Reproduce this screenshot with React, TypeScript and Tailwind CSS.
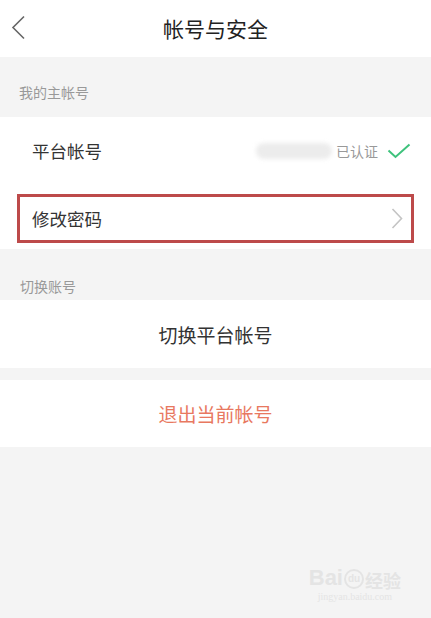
import React from 'react';

const font = { fontFamily: '"Noto Sans CJK SC", "Noto Sans", sans-serif' };

const App: React.FC = () => {
  return (
    <div className="relative min-h-[618px] w-full bg-[#f4f4f4] text-[#333]" style={font}>
      {/* Header */}
      <header className="relative flex h-[57px] items-center justify-center bg-white">
        <svg className="absolute left-[11px] top-[15px]" width="15" height="25" viewBox="0 0 15 25" fill="none">
          <path d="M13 1.5 2 12.5l11 11" stroke="#666" strokeWidth="1.6" />
        </svg>
        <h1 className="text-[21px] leading-none text-[#222]">帐号与安全</h1>
      </header>

      {/* Main account */}
      <div className="flex h-[60px] items-end pb-[18px] pl-[19px] text-[14px] leading-none text-[#999]">
        我的主帐号
      </div>
      <div className="bg-white">
        <div className="flex h-[68px] items-center pl-[32px] pr-[20px]">
          <span className="text-[17.5px] leading-none">平台帐号</span>
          <div className="ml-auto flex items-center">
            <div className="h-[16px] w-[76px] rounded-full bg-[#ececec] blur-[2px]" />
            <span className="ml-[4px] text-[14px] leading-none text-[#999]">已认证</span>
            <svg className="ml-[9px]" width="24" height="16" viewBox="0 0 24 16" fill="none">
              <path d="M1.5 7.5 8.5 14 22.5 1.5" stroke="#3ec27c" strokeWidth="2" />
            </svg>
          </div>
        </div>
        <div className="flex h-[64px] items-center px-[17px] pb-[6px] pt-[9px]">
          <div className="flex h-full flex-1 items-center border-[3px] border-[#bd4a4a] pl-[12px] pr-[8px]">
            <span className="text-[17.5px] leading-none">修改密码</span>
            <svg className="ml-auto" width="12" height="21" viewBox="0 0 12 21" fill="none">
              <path d="M1.5 1 10.5 10.5 1.5 20" stroke="#c4c4c4" strokeWidth="1.6" />
            </svg>
          </div>
        </div>
      </div>

      {/* Switch account */}
      <div className="flex h-[51px] items-end pb-[7px] pl-[20px] text-[14px] leading-none text-[#999]">
        切换账号
      </div>
      <div className="flex h-[68px] items-center justify-center bg-white text-[19px] leading-none text-[#333]">
        切换平台帐号
      </div>
      <div className="mt-[12px] flex h-[67px] items-center justify-center bg-white text-[19px] leading-none text-[#e87860]">
        退出当前帐号
      </div>

      {/* Watermark */}
      <div className="absolute bottom-[16px] right-[30px] flex flex-col items-center text-[#e4e4e4]">
        <div className="flex items-end" style={{ fontFamily: '"Liberation Sans", "Noto Sans CJK SC", sans-serif' }}>
          <span className="text-[22px] font-bold leading-none">Bai</span>
          <span className="mx-[1px] flex h-[20px] w-[20px] items-center justify-center rounded-full border-2 border-[#e4e4e4] text-[10px] font-bold leading-none">du</span>
          <span className="text-[18px] font-bold leading-none" style={font}>经验</span>
        </div>
        <span className="mt-[3px] text-[10px] leading-none" style={{ fontFamily: '"Liberation Serif", serif' }}>jingyan.baidu.com</span>
      </div>
    </div>
  );
};

export default App;
